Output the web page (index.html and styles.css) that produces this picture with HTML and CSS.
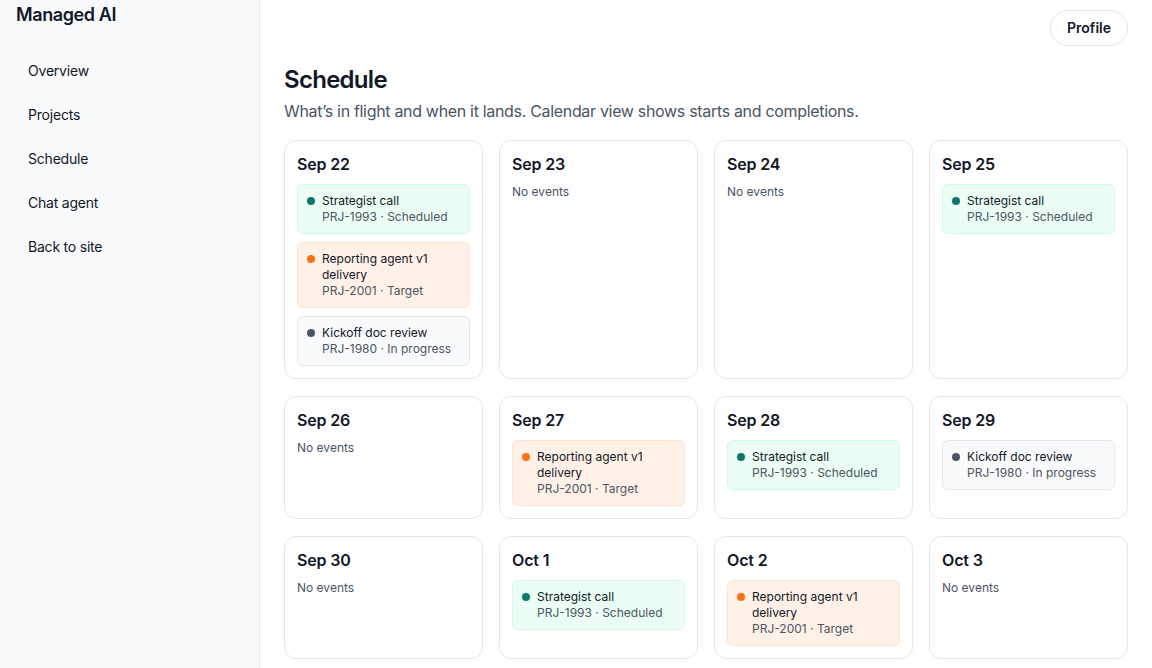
FILE: index.html
```html
<!DOCTYPE html>
<html lang="en">
<head>
<meta charset="utf-8">
<title>Schedule · Managed AI</title>
<link rel="stylesheet" href="styles.css">
</head>
<body>
<div class="app">
  <aside class="sidebar">
    <div class="brand">Managed AI</div>
    <nav class="nav">
      <a class="nav-item">Overview</a>
      <a class="nav-item">Projects</a>
      <a class="nav-item">Schedule</a>
      <a class="nav-item">Chat agent</a>
      <a class="nav-item">Back to site</a>
    </nav>
  </aside>
  <main class="main">
    <div class="topbar"><button class="profile">Profile</button></div>
    <h1 class="title">Schedule</h1>
    <p class="subtitle">What’s in flight and when it lands. Calendar view shows starts and completions.</p>
    <div class="grid">
      <div class="day">
        <div class="date">Sep 22</div>
        <div class="event green"><span class="dot"></span><div><div class="ev-title">Strategist call</div><div class="ev-sub">PRJ-1993 · Scheduled</div></div></div>
        <div class="event orange"><span class="dot"></span><div><div class="ev-title">Reporting agent v1 delivery</div><div class="ev-sub">PRJ-2001 · Target</div></div></div>
        <div class="event gray"><span class="dot"></span><div><div class="ev-title">Kickoff doc review</div><div class="ev-sub">PRJ-1980 · In progress</div></div></div>
      </div>
      <div class="day"><div class="date">Sep 23</div><div class="empty">No events</div></div>
      <div class="day"><div class="date">Sep 24</div><div class="empty">No events</div></div>
      <div class="day">
        <div class="date">Sep 25</div>
        <div class="event green"><span class="dot"></span><div><div class="ev-title">Strategist call</div><div class="ev-sub">PRJ-1993 · Scheduled</div></div></div>
      </div>
      <div class="day"><div class="date">Sep 26</div><div class="empty">No events</div></div>
      <div class="day">
        <div class="date">Sep 27</div>
        <div class="event orange"><span class="dot"></span><div><div class="ev-title">Reporting agent v1 delivery</div><div class="ev-sub">PRJ-2001 · Target</div></div></div>
      </div>
      <div class="day">
        <div class="date">Sep 28</div>
        <div class="event green"><span class="dot"></span><div><div class="ev-title">Strategist call</div><div class="ev-sub">PRJ-1993 · Scheduled</div></div></div>
      </div>
      <div class="day">
        <div class="date">Sep 29</div>
        <div class="event gray"><span class="dot"></span><div><div class="ev-title">Kickoff doc review</div><div class="ev-sub">PRJ-1980 · In progress</div></div></div>
      </div>
      <div class="day"><div class="date">Sep 30</div><div class="empty">No events</div></div>
      <div class="day">
        <div class="date">Oct 1</div>
        <div class="event green"><span class="dot"></span><div><div class="ev-title">Strategist call</div><div class="ev-sub">PRJ-1993 · Scheduled</div></div></div>
      </div>
      <div class="day">
        <div class="date">Oct 2</div>
        <div class="event orange"><span class="dot"></span><div><div class="ev-title">Reporting agent v1 delivery</div><div class="ev-sub">PRJ-2001 · Target</div></div></div>
      </div>
      <div class="day"><div class="date">Oct 3</div><div class="empty">No events</div></div>
    </div>
  </main>
</div>
</body>
</html>
```

FILE: styles.css
```css
* { box-sizing: border-box; }
html, body { margin: 0; padding: 0; }
body {
  font-family: Inter, "Noto Sans", "Liberation Sans", sans-serif;
  color: #111827;
  background: #ffffff;
  overflow: hidden;
}
.app { display: flex; min-height: 668px; }
.sidebar {
  width: 260px;
  flex: 0 0 260px;
  background: #f9fafb;
  border-right: 1px solid #e5e7eb;
  padding: 1px 12px 0 16px;
}
.brand {
  font-size: 18px;
  line-height: 28px;
  font-weight: 600;
  letter-spacing: -0.022em;
  margin-bottom: 20px;
}
.nav { display: flex; flex-direction: column; }
.nav-item {
  display: block;
  padding: 12px 12px;
  font-size: 14px;
  line-height: 20px;
  letter-spacing: -0.015em;
  color: #111827;
  text-decoration: none;
}
.main {
  flex: 1;
  padding: 10px 24px 24px 24px;
  min-width: 0;
}
.topbar { display: flex; justify-content: flex-end; }
.profile {
  font-family: inherit;
  font-size: 14px;
  font-weight: 600;
  line-height: 20px;
  color: #111827;
  background: #fff;
  border: 1px solid #e5e7eb;
  border-radius: 999px;
  padding: 7px 16px;
  height: 36px;
}
.title {
  margin: 18px 0 0;
  font-size: 24px;
  line-height: 32px;
  font-weight: 600;
  letter-spacing: -0.03em;
}
.subtitle {
  margin: 3px 0 0;
  font-size: 16px;
  line-height: 24px;
  letter-spacing: -0.02em;
  color: #4b5563;
}
.grid {
  margin-top: 17px;
  display: grid;
  grid-template-columns: repeat(4, 1fr);
  gap: 17px 16px;
}
.day {
  border: 1px solid #e5e7eb;
  border-radius: 12px;
  padding: 11px 12px 12px;
  display: flex;
  flex-direction: column;
  gap: 8px;
  min-height: 123px;
}
.date {
  font-size: 16px;
  line-height: 24px;
  font-weight: 600;
  letter-spacing: -0.01em;
}
.empty {
  font-size: 12px;
  line-height: 16px;
  color: #4b5563;
}
.event {
  display: flex;
  gap: 7px;
  align-items: flex-start;
  border: 1px solid;
  border-radius: 6px;
  padding: 8px 9px;
  font-size: 12px;
  line-height: 16px;
}
.dot {
  width: 8px;
  height: 8px;
  border-radius: 50%;
  margin-top: 4px;
  flex: 0 0 8px;
}
.ev-title { color: #111827; }
.ev-sub { color: #4b5563; }
.green { background: #ecfdf5; border-color: #d1fae5; }
.green .dot { background: #0f766e; }
.orange { background: #fff1e7; border-color: #fde3d0; }
.orange .dot { background: #f97316; }
.gray { background: #f9fafb; border-color: #e5e7eb; }
.gray .dot { background: #4b5563; }
```
